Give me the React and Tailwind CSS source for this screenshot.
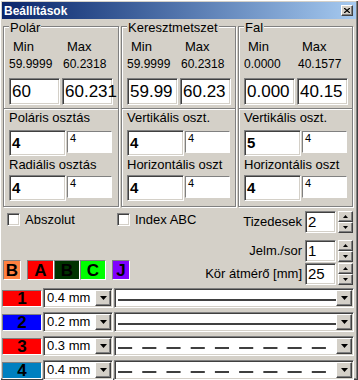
import React from "react";

const sunken =
  "border border-t-[#808080] border-l-[#808080] border-b-white border-r-white shadow-[inset_1px_1px_0_#404040,inset_-1px_-1px_0_#d4d0c8]";
const raised =
  "border border-t-white border-l-white border-b-[#404040] border-r-[#404040] shadow-[inset_-1px_-1px_0_#808080]";
const thin = "border border-t-[#808080] border-l-[#808080] border-b-white border-r-white";

const DownArrow = () => (
  <svg width="7" height="4" viewBox="0 0 7 4">
    <path d="M0 0h7L3.5 4z" fill="#000" />
  </svg>
);

const SpinArrow = ({ up }) => (
  <svg width="5" height="3" viewBox="0 0 5 3">
    <path d={up ? "M0 3h5L2.5 0z" : "M0 0h5L2.5 3z"} fill="#000" />
  </svg>
);

const Field = ({ value, className, text }) => (
  <div className={`bg-white flex pl-[2px] ${className}`}>
    <span className={text}>{value}</span>
  </div>
);

const Group = ({ title, w, mins, inputs, lower }) => (
  <div className={`relative pt-[7px] ${w}`}>
    <span className="absolute left-[6px] top-[1px] bg-[#d4d0c8] px-[1px] text-[13px] leading-[15px]">
      {title}
    </span>
    <div className="h-[181px] border border-[#808080] shadow-[inset_1px_1px_0_#fff,1px_1px_0_#fff] pt-[12px]">
      <div className="flex gap-[2px] pl-[5px] text-[13px] leading-[15px]">
        <span className="w-[51px] pl-[4px]">Min</span>
        <span className="w-[51px] pl-[5px]">Max</span>
      </div>
      <div className="flex gap-[2px] pl-[5px] mt-[3px] text-[12px] leading-[14px]">
        <span className="w-[51px]">{mins[0]}</span>
        <span className="w-[51px] pl-[1px]">{mins[1]}</span>
      </div>
      <div className="flex gap-[2px] pl-[5px] mt-[7px]">
        {inputs.map((v, i) => (
          <Field
            key={i}
            value={v}
            className={`${sunken} w-[51px] h-[27px] items-center`}
            text="text-[17px] leading-[20px]"
          />
        ))}
      </div>
      <div className="mt-[3px] h-[2px] border-t border-t-[#808080] border-b border-b-white" />
      {lower.map((row, i) => (
        <div key={i} className={i ? "mt-[1px]" : ""}>
          <div className="pl-[5px] text-[13px] leading-[15px]">{row.label}</div>
          <div className={`flex gap-[1px] pl-[5px] items-start ${i ? "mt-[3px]" : "mt-[5px]"}`}>
            <Field
              value={row.big}
              className={`${sunken} w-[57px] h-[26px] items-center`}
              text="text-[15px] font-bold leading-[18px]"
            />
            <Field
              value="4"
              className={`${thin} w-[45px] h-[22px] mt-[1px] items-start`}
              text="text-[11px] leading-[13px]"
            />
          </div>
        </div>
      ))}
    </div>
  </div>
);

const Check = () => <div className={`${sunken} bg-white w-[13px] h-[13px]`} />;

const ColorBtn = ({ letter, bg, w, ml }) => (
  <div
    className={`${thin} ${bg} ${w} ${ml} h-[20px] flex items-center justify-center text-[17px] font-bold leading-none`}
  >
    {letter}
  </div>
);

const Spinner = ({ label, value, mt }) => (
  <div className={`flex items-center h-[22px] ${mt}`}>
    <span className="text-[13px] mr-[3px]">{label}</span>
    <Field value={value} className={`${sunken} w-[31px] h-[22px] items-center`} text="text-[15px] leading-[18px]" />
    <div className="ml-[2px] w-[15px] h-[22px] flex flex-col">
      <div className={`${raised} bg-[#d4d0c8] h-[11px] flex items-center justify-center`}>
        <SpinArrow up />
      </div>
      <div className={`${raised} bg-[#d4d0c8] h-[11px] flex items-center justify-center`}>
        <SpinArrow />
      </div>
    </div>
  </div>
);

const LineRow = ({ num, bg, width, dashed }) => (
  <div className="flex items-center h-[20px] pl-[2px]">
    <div className={`${thin} ${bg} w-[40px] h-[17px] flex items-center justify-center text-[17px] font-bold leading-none`}>
      {num}
    </div>
    <div className={`${sunken} bg-white w-[70px] h-[20px] ml-[1px] p-[1px] flex items-center`}>
      <span className="flex-1 pl-[2px] text-[13px]">{width}</span>
      <div className={`${raised} bg-[#d4d0c8] w-[16px] h-[16px] flex items-center justify-center`}>
        <DownArrow />
      </div>
    </div>
    <div className={`${sunken} bg-white w-[240px] h-[20px] ml-[1px] p-[1px] flex items-center`}>
      <svg className="flex-1" height="16" viewBox="0 0 218 16" preserveAspectRatio="none">
        <line
          x1="2"
          y1="10"
          x2="218"
          y2="10"
          stroke="#000"
          strokeWidth="1.5"
          strokeDasharray={dashed ? "14 10" : undefined}
        />
      </svg>
      <div className={`${raised} bg-[#d4d0c8] w-[16px] h-[16px] flex items-center justify-center`}>
        <DownArrow />
      </div>
    </div>
  </div>
);

export default function App() {
  return (
    <div className="w-[358px] h-[380px] overflow-hidden bg-[#d4d0c8] text-black font-['Liberation_Sans',Arial,sans-serif] shadow-[inset_1px_1px_0_#fff,inset_-1px_-1px_0_#404040,inset_-2px_-2px_0_#808080]">
      {/* title bar */}
      <div className="mx-[2px] mt-[2px] h-[17px] flex items-center bg-gradient-to-r from-[#0a246a] to-[#a6caf0] pl-[2px] pr-[3px]">
        <span className="text-white font-bold text-[12px]">Beállítások</span>
        <div className={`${raised} bg-[#d4d0c8] ml-auto w-[12px] h-[11px] flex items-center justify-center`}>
          <svg width="6" height="5" viewBox="0 0 6 5">
            <path d="M0 0l6 5M6 0L0 5" stroke="#000" strokeWidth="1.3" />
          </svg>
        </div>
      </div>

      <div className="flex gap-[2px] pl-[3px]">
        <Group
          title="Polár"
          w="w-[116px]"
          mins={["59.9999", "60.2318"]}
          inputs={["60", "60.231"]}
          lower={[
            { label: "Poláris osztás", big: "4" },
            { label: "Radiális osztás", big: "4" },
          ]}
        />
        <Group
          title="Keresztmetszet"
          w="w-[115px]"
          mins={["59.9999", "60.2318"]}
          inputs={["59.99", "60.23"]}
          lower={[
            { label: "Vertikális oszt.", big: "4" },
            { label: "Horizontális oszt", big: "4" },
          ]}
        />
        <Group
          title="Fal"
          w="w-[115px]"
          mins={["0.0000", "40.1577"]}
          inputs={["0.000", "40.15"]}
          lower={[
            { label: "Vertikális oszt.", big: "5" },
            { label: "Horizontális oszt", big: "4" },
          ]}
        />
      </div>

      <div className="flex h-[81px]">
        <div className="w-[200px] pt-[6px]">
          <div className="flex items-center h-[13px] pl-[7px] text-[13px]">
            <div className="flex items-center w-[110px]">
              <Check />
              <span className="ml-[5px]">Abszolut</span>
            </div>
            <div className="flex items-center">
              <Check />
              <span className="ml-[5px]">Index ABC</span>
            </div>
          </div>
          <div className="flex mt-[34px] pl-[3px]">
            <ColorBtn letter="B" bg="bg-[#ff8040]" w="w-[18px]" ml="" />
            <ColorBtn letter="A" bg="bg-[#ff0000]" w="w-[27px]" ml="ml-[6px]" />
            <ColorBtn letter="B" bg="bg-[#003300]" w="w-[26px]" ml="" />
            <ColorBtn letter="C" bg="bg-[#00ff00]" w="w-[26px]" ml="" />
            <ColorBtn letter="J" bg="bg-[#8000ff]" w="w-[18px]" ml="ml-[6px]" />
          </div>
        </div>
        <div className="flex-1 pt-[4px] pr-[5px] flex flex-col items-end">
          <Spinner label="Tizedesek" value="2" mt="" />
          <Spinner label="Jelm./sor" value="1" mt="mt-[7px]" />
          <Spinner label="Kör átmérő [mm]" value="25" mt="mt-[1px]" />
        </div>
      </div>

      <div className="flex flex-col gap-[4px]">
        <LineRow num="1" bg="bg-[#ff0000]" width="0.4 mm" />
        <LineRow num="2" bg="bg-[#0000ff]" width="0.2 mm" />
        <LineRow num="3" bg="bg-[#ff0000]" width="0.3 mm" dashed />
        <LineRow num="4" bg="bg-[#0080c0]" width="0.4 mm" dashed />
      </div>
    </div>
  );
}
